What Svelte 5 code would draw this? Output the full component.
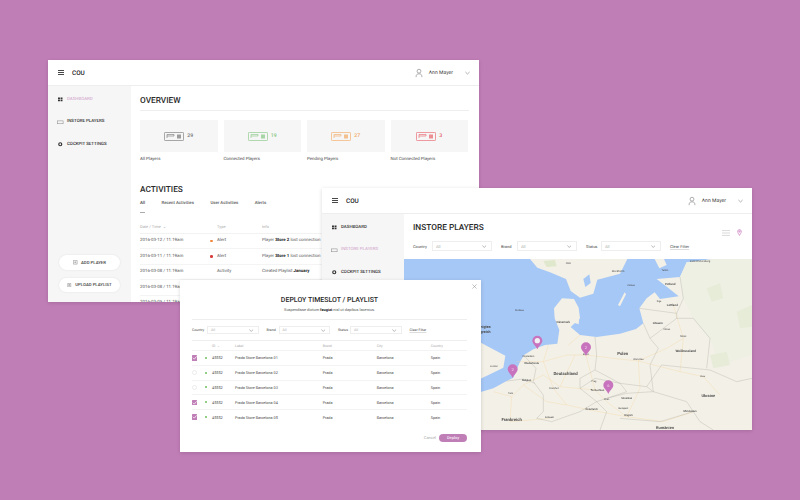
<script>
  const nav = ["DASHBOARD", "INSTORE PLAYERS", "COCKPIT SETTINGS"];
  const cards = [
    { n: 29, label: "All Players", color: "#777" },
    { n: 19, label: "Connected Players", color: "#86c784" },
    { n: 27, label: "Pending Players", color: "#f2aa64" },
    { n: 3, label: "Not Connected Players", color: "#e8626a" }
  ];
  const tabs = ["All", "Recent Activities", "User Activities", "Alerts"];
  const activities = [
    { date: "2016-03-12 / 11:19am", dot: "#f0883c", type: "Alert", pre: "Player ", bold: "Store 2", post: " lost connection" },
    { date: "2016-03-11 / 11:19am", dot: "#d83c3c", type: "Alert", pre: "Player ", bold: "Store 1", post: " lost connection" },
    { date: "2016-03-08 / 11:19am", dot: "", type: "Activity", pre: "Created Playlist ", bold: "January", post: "" },
    { date: "2016-03-08 / 11:19am", dot: "", type: "Activity", pre: "Created Playlist ", bold: "January", post: "" },
    { date: "2016-03-05 / 11:19am", dot: "", type: "Activity", pre: "Created Playlist ", bold: "January", post: "" }
  ];
  const filters = ["Country", "Brand", "Status"];
  const stores = [
    { name: "Prada Store Barcelona 01", on: true },
    { name: "Prada Store Barcelona 02", on: false },
    { name: "Prada Store Barcelona 03", on: false },
    { name: "Prada Store Barcelona 04", on: true },
    { name: "Prada Store Barcelona 05", on: true }
  ];
  const pins = [
    { x: 172, y: 258, t: "" },
    { x: 318, y: 278, t: "2" },
    { x: 98, y: 344, t: "2" },
    { x: 385, y: 392, t: "6" }
  ];
  const labels = [
    { x: 257, y: 361, t: "Deutschland", s: 13, b: 600 },
    { x: 428, y: 300, t: "Polen", s: 13, b: 600 },
    { x: 95, y: 498, t: "Frankreich", s: 13, b: 600 },
    { x: 685, y: 426, t: "Ukraine", s: 12, b: 600 },
    { x: 617, y: 290, t: "Weißrussland", s: 10, b: 600 },
    { x: 555, y: 523, t: "Rumänien", s: 12, b: 600 },
    { x: 250, y: 204, t: "Dänemark", s: 9, b: 500 },
    { x: 533, y: 206, t: "Litauen", s: 9, b: 600 },
    { x: 577, y: 153, t: "Lettland", s: 9, b: 600 },
    { x: 571, y: 89, t: "Estland", s: 9, b: 600 },
    { x: 414, y: 52, t: "Stockholm", s: 8, b: 400 },
    { x: 265, y: 27, t: "Oslo", s: 8, b: 400 },
    { x: 660, y: 22, t: "Sankt Petersburg", s: 8, b: 400 },
    { x: 555, y: 48, t: "Tallinn", s: 7, b: 400 },
    { x: 537, y: 142, t: "Riga", s: 7, b: 400 },
    { x: 560, y: 226, t: "Vilnius", s: 7, b: 400 },
    { x: 318, y: 300, t: "Berlin", s: 7, b: 400 },
    { x: 342, y: 381, t: "Prag", s: 7, b: 400 },
    { x: 380, y: 436, t: "Wien", s: 7, b: 400 },
    { x: 430, y: 461, t: "Budapest", s: 7, b: 400 },
    { x: 668, y: 366, t: "Kiew", s: 7, b: 400 },
    { x: 92, y: 418, t: "Paris", s: 7, b: 400 },
    { x: 145, y: 305, t: "Amsterdam", s: 7, b: 400 },
    { x: 155, y: 327, t: "Niederlande", s: 8, b: 500 },
    { x: 335, y: 466, t: "Österreich", s: 8, b: 500 },
    { x: 440, y: 433, t: "Slowakei", s: 8, b: 500 },
    { x: 446, y: 484, t: "Ungarn", s: 8, b: 500 },
    { x: 208, y: 490, t: "Schweiz", s: 7, b: 500 },
    { x: 352, y: 409, t: "Tschechien", s: 8, b: 500 },
    { x: 475, y: 314, t: "Warschau", s: 7, b: 400 },
    { x: 610, y: 245, t: "Minsk", s: 7, b: 400 },
    { x: 630, y: 470, t: "Moldawien", s: 8, b: 500 },
    { x: 118, y: 168, t: "Nordsee", s: 7, b: 400 },
    { x: 453, y: 93, t: "Ostsee", s: 7, b: 400 },
    { x: 222, y: 402, t: "Frankfurt", s: 7, b: 400 },
    { x: 140, y: 377, t: "Belgien", s: 8, b: 500 },
    { x: 42, y: 335, t: "London", s: 7, b: 400 }
  ];
</script>

{#snippet burger()}
  <svg class="burger" viewBox="0 0 6 5"><path d="M0 .5h6M0 2.500h6M0 4.500h6" /></svg>
{/snippet}

{#snippet topbar()}
  <header>
    {@render burger()}
    <b class="logo">COU</b>
    <span class="spacer"></span>
    <span class="avatar">
      <svg viewBox="0 0 12 12"><circle cx="6" cy="3.800" r="2.300" /><path d="M2.500 11c0-3 1-4 3.500-4s3.500 1 3.500 4" /></svg>
    </span>
    <span class="user">Ann Mayer</span>
    <svg class="chev" viewBox="0 0 6 4"><path d="M.5.800 3 3.200 5.500.800" /></svg>
  </header>
{/snippet}

{#snippet navIcon(i)}
  {#if i === 0}
    <svg class="nav-icon" viewBox="0 0 6 6"><path fill="#333" d="M0 .5h2.600v2.300H0zM3.400 .5H6v2.300H3.400zM0 3.400h2.600v2.300H0zM3.400 3.400H6v2.300H3.400z" /></svg>
  {:else if i === 1}
    <svg class="nav-icon" viewBox="0 0 6 6"><rect x="-.8" y="1.200" width="7.600" height="3.800" fill="none" stroke="#888" stroke-width=".7" /></svg>
  {:else}
    <svg class="nav-icon" viewBox="0 0 6 6"><circle cx="3" cy="3" r="2" fill="none" stroke="#333" stroke-width="1.600" /></svg>
  {/if}
{/snippet}

{#snippet sidebar(active)}
  <ul class="nav">
    {#each nav as item, i}
      <li class:active={i === active}>{@render navIcon(i)}{item}</li>
    {/each}
  </ul>
{/snippet}

{#snippet chevron()}
  <svg class="chev small" viewBox="0 0 6 4"><path d="M.5.800 3 3.200 5.500.800" /></svg>
{/snippet}

{#snippet filterRow()}
  {#each filters as f}
    <span class="f-label">{f}</span>
    <span class="select"><i>All</i>{@render chevron()}</span>
  {/each}
  <span class="clear">Clear Filter</span>
{/snippet}

<main class="page">
  <section class="window one">
    {@render topbar()}
    <div class="body">
      <aside>
        {@render sidebar(0)}
        <div class="actions">
          <button><svg viewBox="0 0 6 6"><path d="M.5.500h5v5h-5zM3 1.800v2.400M1.800 3h2.400" /></svg>ADD PLAYER</button>
          <button><svg viewBox="0 0 6 6"><path d="M1 .500h4v5H1zM2 2h2M2 3h2M2 4h2" /></svg>UPLOAD PLAYLIST</button>
        </div>
      </aside>
      <div class="content">
        <h2 class="rule">OVERVIEW</h2>
        <div class="cards">
          {#each cards as c}
            <div>
              <div class="card" style:color={c.color}>
                <svg viewBox="0 0 20 9">
                  <rect x=".4" y=".4" width="19.200" height="8.200" rx="1" fill="none" stroke="currentColor" stroke-width=".7" />
                  <path d="M3 6V2.500h7v1.500H3" fill="none" stroke="currentColor" stroke-width=".6" />
                  <rect x="13" y="2.500" width="4" height="4" fill="currentColor" opacity=".7" />
                </svg>
                <span>{c.n}</span>
              </div>
              <p class="card-label">{c.label}</p>
            </div>
          {/each}
        </div>
        <h2 class="activities">ACTIVITIES</h2>
        <div class="tabs">
          {#each tabs as t, i}<span class:current={i === 0}>{t}</span>{/each}
        </div>
        <div class="act-head">
          <span>Date / Time &nbsp;⌄</span><span></span><span>Type</span><span>Info</span>
        </div>
        {#each activities as a}
          <div class="act-row">
            <span>{a.date}</span>
            <span class="dot" style:background={a.dot}></span>
            <span>{a.type}</span>
            <span>{a.pre}<b>{a.bold}</b>{a.post}</span>
          </div>
        {/each}
      </div>
    </div>
  </section>

  <section class="window two">
    {@render topbar()}
    <div class="body">
      <aside>{@render sidebar(1)}</aside>
      <div class="content2">
        <div class="head2">
          <h2>INSTORE PLAYERS</h2>
          <div class="filters2">{@render filterRow()}</div>
          <div class="views">
            <svg viewBox="0 0 10 7"><path d="M0 .5h10M0 3.500h10M0 6.500h10" /></svg>
            <svg class="pin-ico" viewBox="0 0 6 8"><path d="M3 7.500C2 5.500.8 4.300.8 2.800a2.200 2.200 0 0 1 4.400 0C5.200 4.300 4 5.500 3 7.500z" /><circle cx="3" cy="2.800" r=".8" fill="#fff" /></svg>
          </div>
        </div>
        <svg class="map" viewBox="-228 12 1044 513" preserveAspectRatio="none">
          <rect x="-228" y="12" width="1044" height="513" fill="#a6c8f6" />
          <!-- continent -->
          <path fill="#f3f0e7" d="M0 412 40 400 80 378 100 368 118 325 132 300 160 283 195 270 232 266 238 225 224 190 222 160 246 130 282 132 296 158 300 190 272 216 300 240 350 246 420 236 468 222 490 205 478 160 500 130 524 112 540 132 596 124 566 100 530 72 600 66 620 22 700 12 816 12 816 525 0 525Z" />
          <path fill="#eef0e3" d="M620 22 700 12 816 12 816 300 720 330 690 250 640 190 610 130 600 66Z" />
          <path fill="#e7ecd9" d="M680 100 720 85 730 130 695 140ZM770 170 816 150 816 215 780 220ZM690 300 740 290 750 330 700 340Z" />
          <!-- sweden and norway -->
          <path fill="#f3f0e7" d="M150 12 172 38 210 52 258 72 272 108 300 128 340 116 352 74 420 56 442 12Z" />
          <path fill="#dfe8cc" d="M190 18 225 15 230 34 200 36Z" />
          <path fill="#a6c8f6" d="M310 72 328 58 332 84 316 96Z" />
          <!-- great britain and islands -->
          <path fill="#f3f0e7" d="M-228 262 0 262 38 282 76 302 70 338 30 358 0 372-228 400Z" />
          <path fill="#f3f0e7" d="M414 150 434 112 438 118 420 154ZM524 12 552 12 560 30 538 40Z" />
          <path fill="#f3f0e7" d="M232 166 250 158 256 182 238 190ZM286 188 298 186 296 208 284 204Z" />
          <!-- main roads -->
          <g fill="none" stroke="#f5d49c" stroke-width="1">
            <path d="M110 320 190 320 260 300 318 300 400 310 475 318 560 280 610 250" />
            <path d="M190 320 220 400 260 450 330 465 440 485 550 500 640 470" />
            <path d="M40 410 95 425 130 390 190 360 240 395 345 405 380 440 440 485" />
            <path d="M95 425 90 500 210 490M318 300 345 405M475 318 480 400 440 485M475 318 600 350 670 365 720 420" />
            <path d="M190 320 205 270M265 270 300 240M600 350 610 250 580 150M130 390 200 440 260 450M240 395 285 300" />
          </g>
          <!-- borders -->
          <g fill="none" stroke="#a8a69f" stroke-width="1">
            <path d="M130 300 168 340 160 380 190 420 190 470 170 490 215 500 300 470 350 440 300 400 300 370 345 345 350 300 345 246" />
            <path d="M345 345 420 385 500 395 520 410 510 330 535 280 510 250 490 205" />
            <path d="M80 378 130 372 165 385M300 400 345 370 420 385 440 410 380 430 350 440" />
            <path d="M380 430 440 415 520 410 620 440 660 500 700 525M500 395 545 330 690 345 770 380 816 370" />
            <path d="M510 250 590 190 640 190 690 250 680 340M478 160 590 175 610 130 600 66M590 175 590 190" />
            <path d="M420 490 540 500 640 470M350 440 380 470 360 525" />
          </g>
          <text x="32" y="220" font-size="11" font-weight="600" text-anchor="end">Vereinigtes</text>
          <text x="32" y="235" font-size="11" font-weight="600" text-anchor="end">Königreich</text>
          {#each labels as l}
            <text x={l.x} y={l.y} font-size={l.s} font-weight={l.b} text-anchor="middle">{l.t}</text>
          {/each}
          {#each pins as p}
            <g transform="translate({p.x} {p.y})">
              <path fill="#c873bd" d="M0 25C-5 13-15 8-15 -1a15 15 0 0 1 30 0C15 8 5 13 0 25Z" />
              {#if p.t}
                <text class="pin-n" y="4" text-anchor="middle">{p.t}</text>
              {:else}
                <circle r="8" cy="-1" fill="#f3f0f5" />
              {/if}
            </g>
          {/each}
        </svg>
      </div>
    </div>
  </section>

  <section class="window modal">
    <svg class="close" viewBox="0 0 6 6"><path d="M.5.500l5 5M5.500.500l-5 5" /></svg>
    <h2>DEPLOY TIMESLOT / PLAYLIST</h2>
    <p class="sub">Suspendisse dictum <b>feugiat</b> nisl ut dapibus lacenius.</p>
    <div class="filters3">{@render filterRow()}</div>
    <div class="t-head">
      <span></span><span></span><span>ID &nbsp;⌄</span><span>Label</span><span>Brand</span><span>City</span><span>Country</span>
    </div>
    {#each stores as s}
      <div class="t-row">
        <span class="check" class:on={s.on}>
          {#if s.on}<svg viewBox="0 0 6 6"><path d="M1 3l1.500 1.500L5 1.500" /></svg>{/if}
        </span>
        <span class="green"></span>
        <span>45552</span>
        <span>{s.name}</span>
        <span>Prada</span>
        <span>Barcelona</span>
        <span>Spain</span>
      </div>
    {/each}
    <div class="foot">
      <span class="cancel">Cancel</span>
      <span class="deploy">Deploy</span>
    </div>
  </section>
</main>

<style>
  :global(body) {
    background: #c07eb7;
    font-family: Roboto, "Liberation Sans", sans-serif;
    color: #333;
    text-rendering: geometricPrecision;
  }
  .page {
    position: relative;
    width: 800px;
    height: 500px;
    overflow: hidden;
    background: #c07eb7;
  }
  .window {
    position: absolute;
    background: #fff;
    overflow: hidden;
    box-shadow: 0 1px 4px rgba(0, 0, 0, 0.15);
  }
  .one { left: 48px; top: 60px; width: 431px; height: 242px; }
  .two { left: 322px; top: 188px; width: 430px; height: 242px; }
  .modal { left: 180px; top: 280px; width: 301px; height: 172px; }

  header {
    height: 26px;
    display: flex;
    align-items: center;
    padding: 0 9px 0 10px;
    border-bottom: 1px solid #eee;
    box-sizing: border-box;
  }
  .burger { width: 6px; height: 5px; margin-right: 8px; }
  .burger path { stroke: #333; stroke-width: 0.9; fill: none; }
  .logo { font-size: 6.400px; font-weight: 500; color: #222; }
  .spacer { flex: 1; }
  .avatar {
    width: 10px;
    height: 10px;
    margin-right: 5px;
  }
  .avatar svg { display: block; fill: none; stroke: #888; stroke-width: 0.8; }
  .user { font-size: 5.100px; margin-right: 12px; color: #444; }
  .chev { width: 5px; height: 4px; fill: none; stroke: #777; stroke-width: 0.7; }
  .chev.small { width: 4.500px; height: 3px; stroke: #777; }

  .body { display: flex; height: 216px; }
  aside {
    width: 83px;
    flex: none;
    background: #f6f6f6;
    display: flex;
    flex-direction: column;
    box-sizing: border-box;
  }
  .two aside { width: 82px; }
  .nav {
    list-style: none;
    margin: 0;
    padding: 2px 0 0;
  }
  .nav li {
    height: 22.500px;
    display: flex;
    align-items: center;
    padding-left: 10px;
    font-size: 4.400px;
    font-weight: 500;
    color: #333;
  }
  .nav li.active { color: #cf9cc9; font-weight: 400; }
  .nav-icon { width: 4.500px; height: 4.500px; margin-right: 4.500px; overflow: visible; }

  .actions {
    margin-top: auto;
    padding: 0 11px 10px;
    display: flex;
    flex-direction: column;
    gap: 8px;
  }
  button {
    height: 14.500px;
    border: 0;
    border-radius: 8px;
    background: #fff;
    box-shadow: 0 0 2px rgba(0, 0, 0, 0.1);
    font: 500 4.300px Roboto, sans-serif;
    color: #444;
    padding: 0;
    display: flex;
    align-items: center;
    justify-content: center;
    gap: 3.500px;
  }
  button svg { width: 4.500px; height: 4.500px; fill: none; stroke: #555; stroke-width: 0.5; }

  .content { flex: 1; padding: 10px 10px 0 9px; min-width: 0; }
  h2 { margin: 0; font-weight: 500; color: #2b2b2b; }
  .rule {
    font-size: 8.300px;
    line-height: 11px;
    padding-bottom: 3px;
    border-bottom: 1px solid #eee;
  }
  .cards { display: grid; grid-template-columns: repeat(4, 77.500px); gap: 6px; margin-top: 9px; }
  .card {
    height: 32px;
    background: #f6f6f6;
    display: flex;
    align-items: center;
    justify-content: center;
    gap: 3px;
  }
  .card svg { width: 20px; height: 9px; }
  .card span { font-size: 5.200px; font-weight: 500; }
  .card-label { margin: 5px 0 0; font-size: 4.400px; line-height: 6px; color: #444; }

  .activities { font-size: 8.300px; line-height: 11px; margin-top: 21.500px; font-weight: 500; }
  .tabs {
    display: flex;
    gap: 16.500px;
    margin-top: 5.500px;
    font-size: 4.300px;
    font-weight: 500;
    color: #555;
    line-height: 6px;
  }
  .tabs .current { position: relative; color: #333; }
  .tabs .current::after {
    content: "";
    position: absolute;
    left: 0;
    width: 5px;
    top: 11px;
    height: 1px;
    background: #aaa;
  }
  .act-head, .act-row {
    display: grid;
    grid-template-columns: 70px 7px 45px 1fr;
    align-items: center;
    font-size: 4.400px;
    white-space: nowrap;
  }
  .act-head { color: #aaa; height: 12px; margin-top: 13.500px; font-size: 4px; border-bottom: 1px solid #f2f2f2; }
  .act-row { height: 15.500px; color: #555; border-bottom: 1px solid #f4f4f4; box-sizing: border-box; }
  .act-row b { color: #222; font-weight: 700; }
  .dot { width: 2.500px; height: 2.500px; border-radius: 50%; }

  .content2 { flex: 1; min-width: 0; display: flex; flex-direction: column; }
  .head2 { position: relative; height: 45px; padding: 9px 9px 0; box-sizing: border-box; flex: none; }
  .head2 h2 { font-size: 8.300px; line-height: 11px; }
  .filters2, .filters3 {
    display: flex;
    align-items: center;
    font-size: 4px;
    color: #555;
  }
  .filters2 { margin-top: 7px; }
  .f-label { color: #444; }
  .select {
    display: flex;
    align-items: center;
    justify-content: space-between;
    box-sizing: border-box;
    border: 1px solid #eee;
    color: #aaa;
  }
  .select i { font-style: normal; }
  .filters2 .f-label { width: 19px; }
  .filters2 .f-label:nth-child(3) { width: 16px; }
  .filters2 .f-label:nth-child(5) { width: 15px; }
  .filters2 .select { width: 60px; height: 10px; padding: 0 5px 0 3px; margin-right: 9px; }
  .clear { color: #444; text-decoration: underline; text-decoration-color: #ddd; }
  .views {
    position: absolute;
    right: 10px;
    top: 15px;
    display: flex;
    align-items: center;
    gap: 7px;
  }
  .views svg { width: 8px; height: 6px; fill: none; stroke: #bbb; stroke-width: 0.7; }
  .views .pin-ico { width: 5px; height: 7px; stroke: #c46fb9; stroke-width: 0.8; fill: #fff; }

  .map { display: block; width: 348px; height: 171px; flex: none; filter: blur(0.35px); }
  .map text { font-family: Roboto, sans-serif; fill: #444; }
  .map .pin-n { font-size: 12px; fill: #f0c8e8; font-weight: 500; }

  .modal { padding: 0 14px 0 12px; box-sizing: border-box; }
  .close { position: absolute; right: 4px; top: 4px; width: 5px; height: 5px; fill: none; stroke: #999; stroke-width: 0.7; }
  .modal h2 { font-size: 7px; line-height: 10px; text-align: center; margin-top: 15px; }
  .sub {
    margin: 1.500px 0 0;
    padding-bottom: 6.500px;
    text-align: center;
    font-size: 3.900px;
    line-height: 6px;
    color: #555;
    border-bottom: 1px solid #eee;
  }
  .sub b { color: #222; }
  .filters3 {
    height: 20px;
    box-sizing: content-box;
    font-size: 3.500px;
    border-bottom: 1px solid #eee;
    padding-bottom: 0;
  }
  .filters3 .f-label { width: 15px; }
  .filters3 .f-label:nth-child(3), .filters3 .f-label:nth-child(5) { width: 12px; }
  .filters3 .select { width: 51.500px; height: 8px; padding: 0 4px 0 3px; margin-right: 8px; }
  .t-head, .t-row {
    display: grid;
    grid-template-columns: 12.500px 7.500px 23px 87.700px 54px 54px 1fr;
    align-items: center;
    font-size: 3.800px;
    white-space: nowrap;
  }
  .t-head { height: 9px; color: #aaa; font-size: 3.500px; }
  .t-row { height: 14.800px; color: #444; border-top: 1px solid #f3f3f3; box-sizing: border-box; }
  .check {
    width: 5.500px;
    height: 5.500px;
    box-sizing: border-box;
    border: 1px solid #ececec;
    border-radius: 50%;
    margin-left: -0.500px;
  }
  .check.on { background: #c07eb7; border: 0; border-radius: 0.500px; }
  .check svg { display: block; fill: none; stroke: #fff; stroke-width: 0.8; }
  .green { width: 2px; height: 2px; border-radius: 50%; background: #6cbf5b; }
  .foot {
    display: flex;
    justify-content: flex-end;
    align-items: center;
    gap: 3px;
    margin-top: 10px;
    margin-right: 0;
  }
  .cancel { font-size: 4px; color: #aaa; }
  .deploy {
    width: 28px;
    height: 8px;
    border-radius: 4px;
    background: #c07eb7;
    color: #f7e9f5;
    font-size: 4px;
    font-weight: 500;
    display: flex;
    align-items: center;
    justify-content: center;
  }
</style>
